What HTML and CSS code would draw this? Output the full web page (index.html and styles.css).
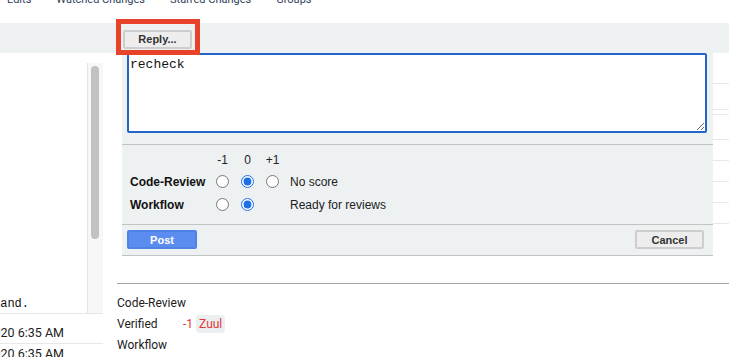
FILE: index.html
```html
<!DOCTYPE html>
<html lang="en">
<head>
    <meta charset="UTF-8">
    <meta name="viewport" content="width=device-width, initial-scale=1.0">
    <title>Change Reply</title>
    <link rel="stylesheet" href="styles.css">
</head>
<body>
    <header class="topnav">
        <nav class="nav-links">
            <a href="#">Edits</a>
            <a href="#">Watched Changes</a>
            <a href="#">Starred Changes</a>
            <a href="#">Groups</a>
        </nav>
    </header>

    <div class="reply-bar">
        <span class="reply-wrap">
            <button class="btn" type="button">Reply...</button>
            <span class="highlight"></span>
        </span>
    </div>

    <main class="content">
        <aside class="thread">
            <div class="msg-box">
                <div class="msg-text">
                    <span>Please run the recheck command.</span>
                </div>
                <div class="msg-scroll">
                    <div class="thumb"></div>
                </div>
            </div>
            <div class="msg-row"><span>Mar 3, 2020 6:35 AM</span></div>
            <div class="msg-row"><span>Mar 3, 2020 6:35 AM</span></div>
        </aside>

        <section class="change">
            <div class="reply-row">
                <form class="reply-panel">
                    <div class="reply-text">
                        <textarea class="message">recheck</textarea>
                    </div>

                    <div class="votes">
                        <span></span>
                        <span class="score">-1</span>
                        <span class="score">0</span>
                        <span class="score">+1</span>
                        <span></span>

                        <label class="vote-label">Code-Review</label>
                        <span class="cell"><input type="radio" name="cr"></span>
                        <span class="cell"><input type="radio" name="cr" checked></span>
                        <span class="cell"><input type="radio" name="cr"></span>
                        <span class="vote-desc">No score</span>

                        <label class="vote-label">Workflow</label>
                        <span class="cell"><input type="radio" name="wf"></span>
                        <span class="cell"><input type="radio" name="wf" checked></span>
                        <span class="cell"></span>
                        <span class="vote-desc">Ready for reviews</span>
                    </div>

                    <div class="actions">
                        <button class="btn btn-primary" type="submit">Post</button>
                        <button class="btn" type="button">Cancel</button>
                    </div>
                </form>

                <div class="side-rows">
                    <div class="side-row" style="height: 31px"></div>
                    <div class="side-row" style="height: 26px"></div>
                    <div class="side-row" style="height: 5px"></div>
                    <div class="side-row" style="height: 25px"></div>
                    <div class="side-row" style="height: 21px"></div>
                    <div class="side-row" style="height: 21px"></div>
                    <div class="side-row" style="height: 21px"></div>
                    <div class="side-row" style="height: 21px"></div>
                </div>
            </div>

            <div class="labels">
                <div class="label-row">
                    <span class="label-name">Code-Review</span>
                </div>
                <div class="label-row">
                    <span class="label-name">Verified</span>
                    <span class="vote-neg">-1</span>
                    <span class="voter">Zuul</span>
                </div>
                <div class="label-row">
                    <span class="label-name">Workflow</span>
                </div>
            </div>
        </section>
    </main>
</body>
</html>
```

FILE: styles.css
```css
* {
    box-sizing: border-box;
    margin: 0;
    padding: 0;
}

body {
    width: 729px;
    height: 357px;
    overflow: hidden;
    background-color: white;
    font-family: Roboto, 'Liberation Sans', Arial, sans-serif;
    color: #222;
}

/* top navigation, scrolled mostly out of view */
.topnav {
    height: 23px;
    overflow: hidden;
}

.nav-links {
    display: flex;
    gap: 25px;
    margin-top: -8px;
    padding-left: 7px;
    line-height: 16px;
    font-size: 11px;
}

.nav-links a {
    color: #2f3f5c;
    text-decoration: none;
}

/* reply bar */
.reply-bar {
    height: 30px;
    background-color: #eef1f2;
    padding: 5px 0 0 123px;
}

.reply-wrap {
    position: relative;
    display: inline-block;
}

.highlight {
    position: absolute;
    left: -7px;
    top: -11px;
    width: 84px;
    height: 36px;
    border: 5px solid #e8432a;
}

.btn {
    display: block;
    height: 19px;
    width: 69px;
    background-color: #ededed;
    border: 2px solid #cdcdcd;
    border-radius: 2px;
    font-family: 'Liberation Sans', Arial, sans-serif;
    font-size: 11px;
    font-weight: bold;
    color: #333;
    cursor: pointer;
}

.btn-primary {
    width: 70px;
    background-color: #5b8df0;
    border-color: #4f82e6;
    color: white;
}

/* main area */
.content {
    display: flex;
}

.thread {
    width: 103px;
    flex-shrink: 0;
    padding-top: 10px;
}

.msg-box {
    display: flex;
    height: 251px;
    border-bottom: 1px solid #e6e6e6;
}

.msg-text {
    flex: 1;
    display: flex;
    align-items: flex-end;
    justify-content: flex-end;
    overflow: hidden;
    white-space: nowrap;
    padding: 0 58px 1px 0;
    font-family: 'Liberation Mono', 'Courier New', monospace;
    font-size: 12px;
    line-height: 15px;
    color: #111;
}

.msg-scroll {
    width: 16px;
    background-color: #f7f7f7;
    border-left: 1px solid #e4e4e4;
    padding: 3px 0 0 3px;
}

.thumb {
    width: 8px;
    height: 173px;
    border-radius: 4px;
    background-color: #c2c2c2;
}

.msg-row {
    display: flex;
    justify-content: flex-end;
    overflow: hidden;
    white-space: nowrap;
    height: 21px;
    margin-top: 9px;
    padding-right: 39px;
    border-bottom: 1px solid #e8e8e8;
    font-size: 12.5px;
    line-height: 20px;
    color: #222;
}

.msg-row + .msg-row {
    margin-top: 0;
}

.change {
    flex: 1;
}

.reply-row {
    display: flex;
    padding-left: 19px;
}

/* reply popup */
.reply-panel {
    width: 591px;
    background-color: #eef1f2;
    font-family: 'Liberation Sans', Arial, sans-serif;
    font-size: 12px;
}

.reply-text {
    padding: 0 6px 11px 5px;
    border-bottom: 1px solid #c3c3c3;
}

.message {
    display: block;
    width: 580px;
    height: 80px;
    border: 2px solid #2463c8;
    border-radius: 2px;
    padding: 2px 1px;
    font-family: 'Liberation Mono', 'Courier New', monospace;
    font-size: 13px;
    line-height: 15px;
    color: #111;
    outline: none;
}

.votes {
    display: grid;
    grid-template-columns: 80px 25px 25px 25px 1fr;
    grid-template-rows: 20px 23px 23px;
    align-items: center;
    padding: 5px 0 0 8px;
    height: 80px;
    border-bottom: 1px solid #c3c3c3;
}

.score {
    text-align: center;
    color: #222;
}

.cell {
    display: flex;
    justify-content: center;
}

.cell input {
    width: 13px;
    height: 13px;
    accent-color: #1f6fe5;
}

.vote-label {
    font-weight: bold;
    color: #111;
}

.vote-desc {
    padding-left: 5px;
    color: #222;
}

.actions {
    display: flex;
    justify-content: space-between;
    height: 31px;
    padding: 5px 9px 0 5px;
    border-bottom: 1px solid #c3c3c3;
}

.side-rows {
    flex: 1;
}

.side-row {
    border-bottom: 1px solid #e9e9e9;
}

/* labels summary */
.labels {
    margin: 27px 0 0 14px;
    padding-top: 9px;
    border-top: 1px solid #a3a3a3;
    font-size: 12px;
    color: #1c1c1c;
}

.label-row {
    display: flex;
    align-items: center;
    height: 21px;
    white-space: nowrap;
}

.label-row:first-child {
    height: 20px;
}

.label-name {
    width: 66px;
    flex-shrink: 0;
}

.vote-neg {
    color: #e53935;
    margin-right: 3px;
}

.voter {
    padding: 2px 3px;
    border-radius: 4px;
    background-color: #eceff1;
    color: #e53935;
}
```
